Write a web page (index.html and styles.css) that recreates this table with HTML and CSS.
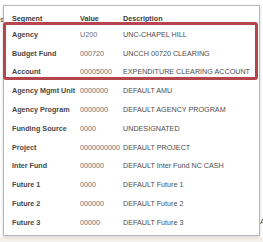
FILE: index.html
```html
<!DOCTYPE html>
<html>
<head>
<meta charset="utf-8">
<link rel="stylesheet" href="styles.css">
</head>
<body>
<div class="page">
  <span class="behind behind-left">Fields</span>
  <span class="behind behind-right">Acc</span>
</div>

<div class="popup">
  <div class="grid head">
    <span>Segment</span><span>Value</span><span>Description</span>
  </div>
  <div class="grid row"><span class="seg">Agency</span><span class="val">U200</span><span class="desc">UNC-CHAPEL HILL</span></div>
  <div class="grid row"><span class="seg">Budget Fund</span><span class="val">000720</span><span class="desc">UNCCH 00720 CLEARING</span></div>
  <div class="grid row"><span class="seg">Account</span><span class="val">00005000</span><span class="desc">EXPENDITURE CLEARING ACCOUNT</span></div>
  <div class="grid row"><span class="seg">Agency Mgmt Unit</span><span class="val">0000000</span><span class="desc">DEFAULT AMU</span></div>
  <div class="grid row"><span class="seg">Agency Program</span><span class="val">0000000</span><span class="desc">DEFAULT AGENCY PROGRAM</span></div>
  <div class="grid row"><span class="seg">Funding Source</span><span class="val">0000</span><span class="desc">UNDESIGNATED</span></div>
  <div class="grid row"><span class="seg">Project</span><span class="val">0000000000</span><span class="desc">DEFAULT PROJECT</span></div>
  <div class="grid row"><span class="seg">Inter Fund</span><span class="val">000000</span><span class="desc">DEFAULT Inter Fund NC CASH</span></div>
  <div class="grid row"><span class="seg">Future 1</span><span class="val">0000</span><span class="desc">DEFAULT Future 1</span></div>
  <div class="grid row"><span class="seg">Future 2</span><span class="val">000000</span><span class="desc">DEFAULT Future 2</span></div>
  <div class="grid row"><span class="seg">Future 3</span><span class="val">00000</span><span class="desc">DEFAULT Future 3</span></div>

  <div class="highlight"></div>
</div>
</body>
</html>
```

FILE: styles.css
```css
html, body {
  margin: 0;
  padding: 0;
}

body {
  width: 263px;
  height: 242px;
  overflow: hidden;
  background: #fbfaf7;
  font-family: "Liberation Sans", Arial, sans-serif;
  font-size: 7.2px;
  color: #333;
  position: relative;
}

/* page content lying under the popup */
.page {
  position: relative;
  height: 242px;
  background: linear-gradient(#ffffff 0, #ffffff 236px, #f4f1e8 238px);
}

.behind {
  position: absolute;
  color: #444;
  font-size: 8px;
}

.behind-left {
  right: 259px;
  top: 15px;
}

.behind-right {
  left: 260px;
  top: 217px;
}

/* segment lookup popup */
.popup {
  position: absolute;
  left: 3px;
  top: 5px;
  width: 255px;
  padding: 5px 0 3px;
  background: #fff;
  border: 1px solid #b9b9b9;
  box-shadow: 0 1px 3px rgba(0, 0, 0, 0.18);
}

.grid {
  display: grid;
  grid-template-columns: 68px 43px 1fr;
  align-items: center;
  padding-left: 8px;
  white-space: nowrap;
}

.head {
  height: 14px;
  font-weight: bold;
  color: #3a3a3a;
}

.row {
  height: 18.8px;
}

.seg {
  font-weight: bold;
  color: #474747;
}

.val {
  color: #6e6e6e;
}

.desc {
  color: #4d4d4d;
}

/* red annotation box around the first three segments */
.highlight {
  position: absolute;
  left: -1px;
  top: 16px;
  width: 249px;
  height: 52px;
  border: 3.5px solid #b4464b;
  border-radius: 3px;
}
```
